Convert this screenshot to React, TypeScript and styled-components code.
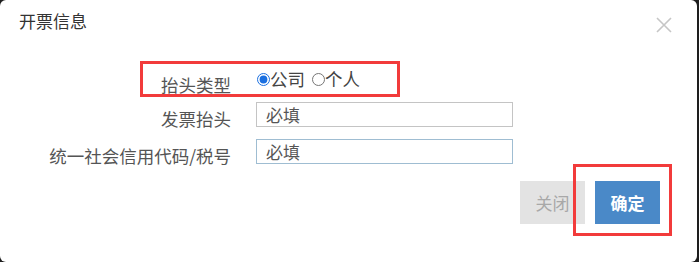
import React from "react";
import styled, { createGlobalStyle } from "styled-components";

const GlobalStyle = createGlobalStyle`
  html, body {
    margin: 0;
    padding: 0;
    background: #1e1e1e;
    font-family: "Noto Sans CJK SC", "Noto Sans", sans-serif;
  }
`;

const Dialog = styled.div`
  position: relative;
  width: 697px;
  height: 262px;
  background: #fff;
  border-radius: 6px;
  overflow: hidden;
  box-sizing: border-box;
`;

const Header = styled.div`
  display: flex;
  align-items: center;
  justify-content: space-between;
  height: 42px;
  padding: 0 25px 0 19px;
`;

const Title = styled.h3`
  margin: 0;
  font-size: 17px;
  font-weight: 400;
  color: #333;
  line-height: 24px;
  margin-top: -1px;
`;

const CloseBtn = styled.button`
  display: flex;
  padding: 0;
  margin-top: 7px;
  border: none;
  background: none;
  cursor: pointer;
`;

const Form = styled.div`
  display: flex;
  flex-direction: column;
  padding-top: 24px;
`;

const Row = styled.div<{ $height: number }>`
  display: flex;
  align-items: flex-start;
  height: ${({ $height }) => $height}px;
  gap: 25px;
`;

const Label = styled.label<{ $offset: number }>`
  width: 200px;
  margin-left: 31px;
  padding-top: ${({ $offset }) => $offset}px;
  text-align: right;
  font-size: 17.5px;
  line-height: 24px;
  color: #555;
  white-space: nowrap;
`;

const RadioGroup = styled.div`
  display: flex;
  align-items: center;
  height: 24px;
  font-size: 17.5px;
  color: #444;
`;

const RadioOption = styled.label<{ $gap?: number }>`
  display: flex;
  align-items: center;
  margin-left: ${({ $gap }) => $gap ?? 0}px;
`;

const Radio = styled.input`
  width: 13px;
  height: 13px;
  margin: 3px 0 0 1px;
  accent-color: #1a6fe0;
`;

const TextInput = styled.input<{ $focused?: boolean }>`
  width: 257px;
  height: 25px;
  box-sizing: border-box;
  padding: 0 9px;
  border: 1px solid ${({ $focused }) => ($focused ? "#9fbdd2" : "#c4c4c4")};
  font-family: inherit;
  font-size: 17px;
  color: #555;
  outline: none;

  &::placeholder {
    color: #555;
  }
`;

const Footer = styled.div`
  display: flex;
  justify-content: flex-end;
  gap: 10px;
  padding: 17px 37px 0 0;
`;

const Button = styled.button<{ $primary?: boolean }>`
  width: 65px;
  height: 43px;
  border: none;
  font-family: inherit;
  font-size: 17px;
  font-weight: ${({ $primary }) => ($primary ? 700 : 400)};
  color: ${({ $primary }) => ($primary ? "#fff" : "#a8a8a8")};
  background: ${({ $primary }) => ($primary ? "#4a89c8" : "#e3e3e3")};
  cursor: pointer;
`;

const Highlight = styled.div`
  position: absolute;
  border: 3px solid #f23b3b;
  box-sizing: border-box;
  pointer-events: none;
`;

export default function App() {
  return (
    <>
      <GlobalStyle />
      <Dialog>
        <Header>
          <Title>开票信息</Title>
          <CloseBtn aria-label="关闭">
            <svg width="16" height="16" viewBox="0 0 16 16">
              <path
                d="M1 1L15 15M15 1L1 15"
                stroke="#c6c6c6"
                strokeWidth="1.6"
                fill="none"
              />
            </svg>
          </CloseBtn>
        </Header>
        <Form>
          <Row $height={36}>
            <Label $offset={7}>抬头类型</Label>
            <RadioGroup>
              <RadioOption>
                <Radio type="radio" name="type" defaultChecked />
                公司
              </RadioOption>
              <RadioOption $gap={6}>
                <Radio type="radio" name="type" />
                个人
              </RadioOption>
            </RadioGroup>
          </Row>
          <Row $height={37}>
            <Label $offset={5}>发票抬头</Label>
            <TextInput placeholder="必填" />
          </Row>
          <Row $height={25}>
            <Label $offset={5}>统一社会信用代码/税号</Label>
            <TextInput placeholder="必填" $focused />
          </Row>
        </Form>
        <Footer>
          <Button>关闭</Button>
          <Button $primary>确定</Button>
        </Footer>
        <Highlight style={{ left: 140, top: 61, width: 260, height: 36 }} />
        <Highlight style={{ left: 573, top: 164, width: 99, height: 72 }} />
      </Dialog>
    </>
  );
}
